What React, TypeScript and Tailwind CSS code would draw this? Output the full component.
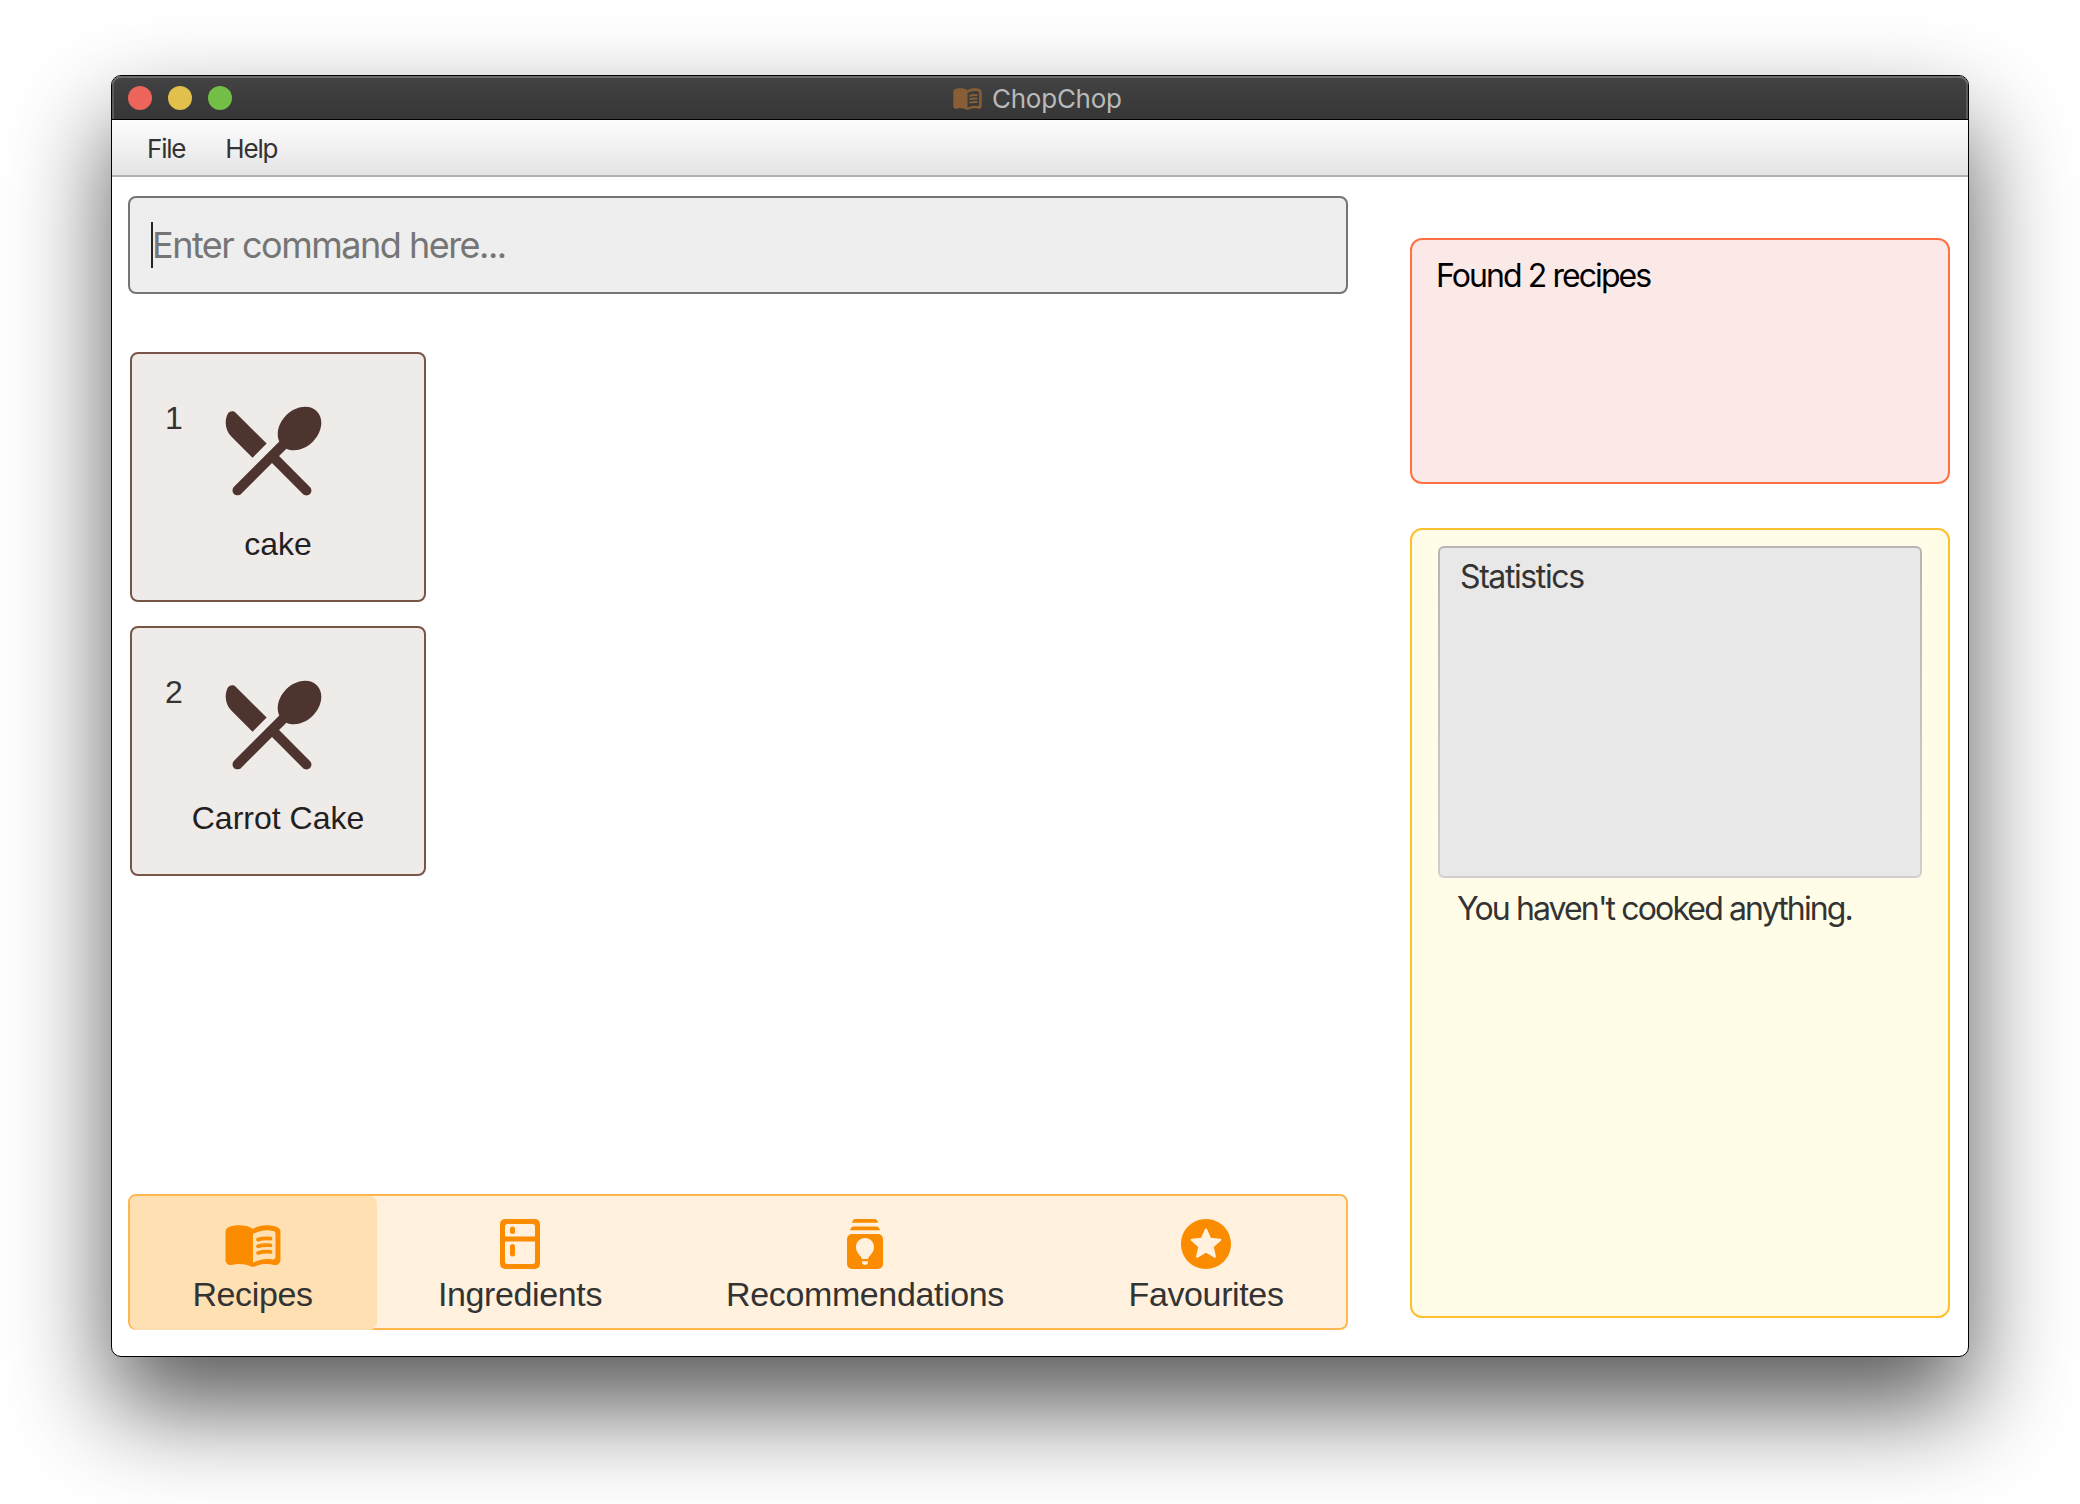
import React from "react";

type IconProps = { className?: string };

function BookIcon({ className }: IconProps) {
  return (
    <svg viewBox="0 0 24 24" fill="currentColor" className={className}>
      <path d="M17.5 4.5c-1.95 0-4.05.4-5.5 1.5-1.45-1.1-3.55-1.5-5.5-1.5-1.45 0-2.99.22-4.28.79C1.49 5.62 1 6.33 1 7.14v11.28c0 1.3 1.22 2.26 2.48 1.94.98-.25 2.02-.36 3.02-.36 1.56 0 3.22.26 4.56.92.6.3 1.28.3 1.87 0 1.34-.67 3-.92 4.56-.92 1 0 2.04.11 3.02.36 1.26.33 2.48-.63 2.48-1.94V7.14c0-.81-.49-1.52-1.22-1.85-1.28-.57-2.82-.79-4.27-.79zM21 17.23c0 .63-.58 1.09-1.2.98-.75-.14-1.53-.2-2.3-.2-1.7 0-4.15.65-5.5 1.5V8c1.35-.85 3.8-1.5 5.5-1.5.92 0 1.83.09 2.7.28.46.1.8.51.8.98v9.47z" />
      <path
        d="M14 10.26c1.6-.5 3.4-.62 5.02-.42M14 12.92c1.6-.5 3.4-.62 5.02-.42M14 15.58c1.6-.5 3.4-.62 5.02-.42"
        fill="none"
        stroke="currentColor"
        strokeWidth="1.5"
        strokeLinecap="round"
      />
    </svg>
  );
}

function FridgeIcon({ className }: IconProps) {
  return (
    <svg viewBox="0 0 24 24" fill="currentColor" className={className}>
      <path
        fillRule="evenodd"
        d="M6 2h12a2 2 0 0 1 2 2v16a2 2 0 0 1-2 2H6a2 2 0 0 1-2-2V4a2 2 0 0 1 2-2zM7 4a1 1 0 0 0-1 1v4h12V5a1 1 0 0 0-1-1zM6 10.98V19a1 1 0 0 0 1 1h10a1 1 0 0 0 1-1v-8.02z"
      />
      <rect x="8" y="5" width="2" height="3" rx="1" />
      <rect x="8" y="12" width="2" height="5" rx="1" />
    </svg>
  );
}

function BulbStackIcon({ className }: IconProps) {
  return (
    <svg viewBox="0 0 60 60" fill="currentColor" className={className}>
      <path d="M20.5 5h19c2 0 3 1.3 3.400 3.800H17.100C17.500 6.300 18.500 5 20.500 5z" />
      <path d="M19 12.500h22c2 0 3.400 1.300 4 3.800H15c.6-2.500 2-3.800 4-3.800z" />
      <path
        fillRule="evenodd"
        d="M17 20h26a5 5 0 0 1 5 5v25a5 5 0 0 1-5 5H17a5 5 0 0 1-5-5V25a5 5 0 0 1 5-5zM30 24c-5.200 0-9 4-9 9 0 6.500 5 8 5.900 12h6.200c.9-4 5.900-5.500 5.900-12 0-5-3.800-9-9-9zM27 47.300v1c0 1.400 1.300 2.700 3 2.700s3-1.300 3-2.700v-1z"
      />
    </svg>
  );
}

function StarIcon({ className }: IconProps) {
  return (
    <svg viewBox="0 0 24 24" fill="currentColor" className={className}>
      <path d="M11.990 2C6.470 2 2 6.480 2 12s4.470 10 9.990 10C17.520 22 22 17.520 22 12S17.520 2 11.990 2zm3.230 15.390L12 15.450l-3.220 1.940c-.38.23-.85-.11-.75-.54l.85-3.660-2.830-2.450c-.33-.29-.15-.84.29-.88l3.740-.32 1.460-3.450c.17-.41.75-.41.92 0l1.460 3.440 3.740.32c.44.04.62.59.28.88l-2.830 2.450.85 3.670c.1.430-.36.770-.74.540z" />
    </svg>
  );
}

function CutleryIcon({ className }: IconProps) {
  return (
    <svg viewBox="0 0 24 24" fill="currentColor" className={className}>
      <path d="M8.100 13.340l2.830-2.830-6.190-6.180c-.48-.48-1.310-.35-1.610.27-.71 1.490-.45 3.320.78 4.560l4.190 4.180zm6.780-1.810c1.530.71 3.680.21 5.270-1.380 1.910-1.910 2.280-4.650.81-6.120-1.460-1.460-4.200-1.100-6.120.81-1.590 1.590-2.090 3.740-1.380 5.270L4.400 19.170c-.39.39-.39 1.020 0 1.410.39.39 1.020.39 1.410 0L12 14.410l6.180 6.180c.39.39 1.020.39 1.410 0 .39-.39.39-1.020 0-1.410L13.410 13l1.470-1.470z" />
    </svg>
  );
}

function TitleBar() {
  return (
    <div className="relative flex h-11 shrink-0 items-center rounded-t-[9px] border-b border-black bg-linear-to-b from-[#434343] to-[#363636] px-4 shadow-[inset_0_2px_0_#6b6d6b,inset_2px_0_0_#5a5a5a,inset_-2px_0_0_#5a5a5a]">
      <div className="flex gap-4">
        <span className="size-6 rounded-full bg-[#ed655a]" />
        <span className="size-6 rounded-full bg-[#e1c04c]" />
        <span className="size-6 rounded-full bg-[#72be47]" />
      </div>
      <div className="absolute inset-y-0 left-[840px] flex items-center">
        <BookIcon className="h-8 w-[31px] text-[#875e35]" />
        <span className="mt-0.5 ml-[9px] text-[26px] leading-none tracking-[-0.25px] text-[#b9b9b9]">ChopChop</span>
      </div>
    </div>
  );
}

function RecipeCard({ index, name }: { index: number; name: string }) {
  return (
    <div className="flex h-[250px] w-[296px] flex-col rounded-lg border-2 border-[#795548] bg-[#efebe9] font-['Liberation_Sans',Arial,sans-serif] text-[32px]">
      <div className="flex pt-[37px] pl-[33px]">
        <span className="mt-[9px] w-[47px] leading-9 text-[#333]">{index}</span>
        <CutleryIcon className="size-[120px] text-[#4e342e]" />
      </div>
      <div className="mt-[15px] text-center leading-9 text-[#212121]">{name}</div>
    </div>
  );
}

const tabs = [
  { label: "Recipes", Icon: BookIcon, box: "w-[247px] rounded-lg bg-[#ffe0b2] pr-0.5" },
  { label: "Ingredients", Icon: FridgeIcon, box: "w-[286px]" },
  { label: "Recommendations", Icon: BulbStackIcon, box: "w-[404px]" },
  { label: "Favourites", Icon: StarIcon, box: "w-[279px] pr-px" },
];

export default function App() {
  return (
    <div className="flex h-[1504px] w-[2080px] bg-white pt-[75px] pl-[111px] font-[Inter,sans-serif]">
      <div className="flex h-[1282px] w-[1858px] flex-col rounded-[10px] border border-black bg-white shadow-[0_50px_100px_rgba(0,0,0,0.66)]">
        <TitleBar />
        <div className="flex h-[57px] shrink-0 items-center gap-10 border-b-2 border-[#b1b1b1] bg-linear-to-b from-[#fdfdfd] to-[#e4e4e4] pt-0.5 pl-[35px] text-[26px] leading-none tracking-[-1.2px] text-[#333]">
          <span>File</span>
          <span>Help</span>
        </div>
        <div className="flex min-h-0 flex-1 pl-4">
          <div className="flex w-[1220px] flex-col pt-[19px]">
            <div className="flex h-[98px] items-center rounded-lg border-2 border-[#757575] bg-[#eee] pl-[21px]">
              <span className="h-[46px] w-0.5 bg-[#222]" />
              <span className="-ml-px text-[36px] leading-none tracking-[-1.5px] text-[#757575]">Enter command here...</span>
            </div>
            <div className="mt-[58px] flex flex-col gap-6 pl-0.5">
              <RecipeCard index={1} name="cake" />
              <RecipeCard index={2} name="Carrot Cake" />
            </div>
            <nav className="mt-auto mb-[26px] flex h-[136px] rounded-lg border-2 border-[#ffb74d] bg-[#fff1de] font-['Liberation_Sans',Arial,sans-serif]">
              {tabs.map(({ label, Icon, box }) => (
                <div key={label} className={`flex h-[134px] flex-col items-center pt-[18px] ${box}`}>
                  <Icon className="size-[60px] text-[#fb8c00]" />
                  <span className="text-[34px] leading-[40px] tracking-[-0.37px] text-[#333]">{label}</span>
                </div>
              ))}
            </nav>
          </div>
          <div className="ml-[62px] flex w-[540px] flex-col pt-[61px]">
            <div className="h-[246px] rounded-xl border-2 border-[#ff7043] bg-[#fbe9e7] px-[24px] pt-[18px] text-[32px] leading-9 tracking-[-1.92px] text-black">
              Found 2 recipes
            </div>
            <div className="mt-11 h-[790px] rounded-xl border-2 border-[#fbc02d] bg-[#fffde7] px-[26px] pt-4 text-[32px] leading-9 text-[#333]">
              <div className="h-[332px] rounded-md bg-linear-to-b from-[#b5b5b5] to-[#cfcfcf] p-0.5">
                <div className="h-full rounded bg-[#e8e8e8] pt-[11px] pl-[20px] tracking-[-1.4px]">Statistics</div>
              </div>
              <div className="pt-[13px] pl-[19px] tracking-[-1.87px]">You haven't cooked anything.</div>
            </div>
          </div>
        </div>
      </div>
    </div>
  );
}
